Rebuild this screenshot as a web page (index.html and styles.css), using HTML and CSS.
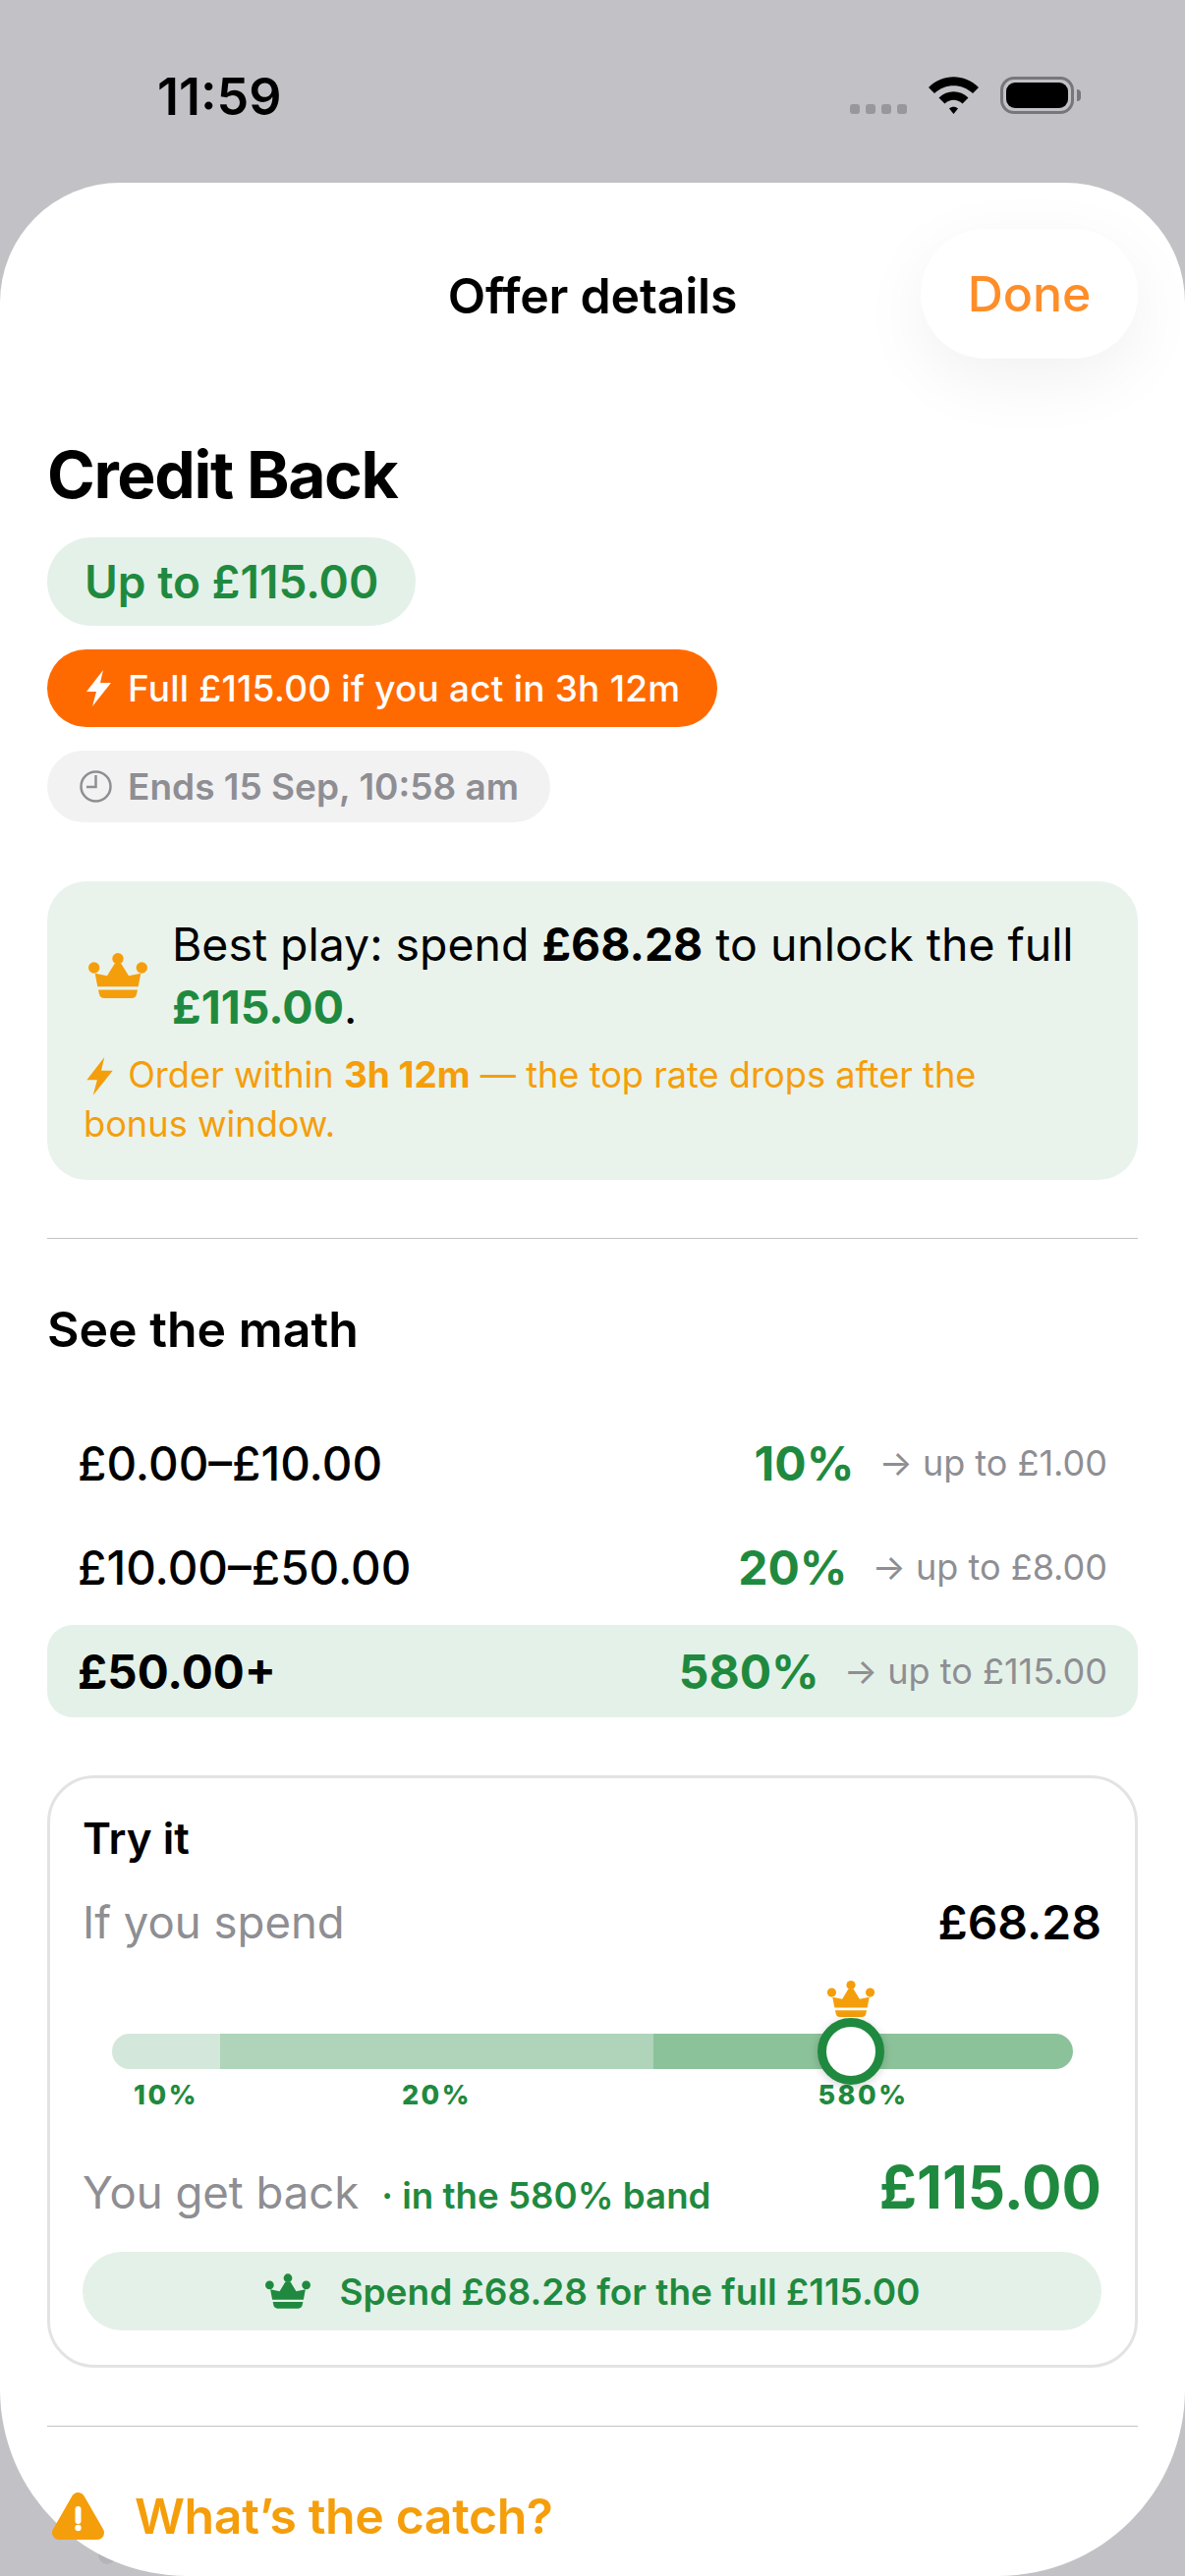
FILE: index.html
```html
<!DOCTYPE html>
<html lang="en">
<head>
    <meta charset="UTF-8">
    <meta name="viewport" content="width=device-width, initial-scale=1.0">
    <title>Offer details</title>
    <link rel="stylesheet" href="styles.css">
</head>
<body>
    <svg class="defs" width="0" height="0">
        <symbol id="crown" viewBox="0 0 60 46">
            <circle cx="5.7" cy="15" r="5.7"/>
            <circle cx="30" cy="5.7" r="5.7"/>
            <circle cx="54.3" cy="15" r="5.7"/>
            <path d="M6.7 20.7 19 23.3 26.7 10.7H33.3L41 23.3 53.3 20.7 50.7 34.3H9.3Z"/>
            <path d="M10 37.5H50L49 42Q48 46 44 46H16Q12 46 11 42Z"/>
        </symbol>
        <symbol id="bolt" viewBox="0 0 25 37">
            <path d="M17 0 0 22H10L6 37 25 13H14Z"/>
        </symbol>
    </svg>

    <div class="status-bar">
        <span class="time">11:59</span>
        <div class="status-icons">
            <div class="signal"><i></i><i></i><i></i><i></i></div>
            <svg class="wifi" viewBox="0 0 51 38">
                <path d="M0 11C14-3.5 37-3.5 51 11L45 17C34 6.5 17 6.5 6 17Z"/>
                <path d="M10.5 21.5C19 13 32 13 40.5 21.5L34.5 27.5C29 22.5 22 22.5 16.5 27.5Z"/>
                <path d="M21 32.5C23.5 30 27.5 30 30 32.5L25.5 38Z"/>
            </svg>
            <div class="battery"><div class="battery-fill"></div></div>
            <div class="battery-nub"></div>
        </div>
    </div>

    <div class="edge-mark"></div>

    <main class="sheet">
        <header class="nav">
            <span></span>
            <span class="nav-title">Offer details</span>
            <button class="done">Done</button>
        </header>

        <h1 class="offer-title">Credit Back</h1>

        <div class="pills">
            <div class="pill pill-amount">Up to £115.00</div>
            <div class="pill pill-urgent">
                <svg class="pill-bolt"><use href="#bolt"/></svg>
                Full £115.00 if you act in 3h 12m
            </div>
            <div class="pill pill-ends">
                <svg class="clock" viewBox="0 0 33 33">
                    <circle cx="16.5" cy="16.5" r="15"/>
                    <path d="M16.5 5V17H7"/>
                </svg>
                Ends 15 Sep, 10:58 am
            </div>
        </div>

        <section class="best">
            <div class="best-main">
                <svg class="best-crown"><use href="#crown"/></svg>
                <p>Best play: spend <b>£68.28</b> to unlock the full <b class="green">£115.00</b>.</p>
            </div>
            <p class="best-note">
                <svg class="note-bolt"><use href="#bolt"/></svg>
                Order within <b>3h 12m</b> — the top rate drops after the<br>bonus window.
            </p>
        </section>

        <hr class="divider">

        <h2 class="math-title">See the math</h2>

        <div class="bands">
            <div class="band">
                <span class="band-range">£0.00–£10.00</span>
                <span class="band-rate">10%</span>
                <span class="band-cap">→ up to £1.00</span>
            </div>
            <div class="band">
                <span class="band-range">£10.00–£50.00</span>
                <span class="band-rate">20%</span>
                <span class="band-cap">→ up to £8.00</span>
            </div>
            <div class="band band-top">
                <span class="band-range">£50.00+</span>
                <span class="band-rate">580%</span>
                <span class="band-cap">→ up to £115.00</span>
            </div>
        </div>

        <section class="try">
            <h3 class="try-title">Try it</h3>
            <div class="spend-row">
                <span class="muted">If you spend</span>
                <span class="spend-value">£68.28</span>
            </div>

            <div class="slider">
                <div class="track">
                    <div class="seg seg-1" style="width: 11.25%"></div>
                    <div class="seg seg-2" style="width: 45.09%"></div>
                    <div class="seg seg-3" style="width: 43.66%"></div>
                </div>
                <div class="thumb" style="left: 76.9%">
                    <svg class="thumb-crown"><use href="#crown"/></svg>
                    <div class="knob"></div>
                </div>
                <div class="ticks">
                    <span style="width: 11.25%">10%</span>
                    <span style="width: 45.09%">20%</span>
                    <span style="width: 43.66%">580%</span>
                </div>
            </div>

            <div class="back-row">
                <span class="muted">You get back</span>
                <span class="back-band">· in the 580% band</span>
                <span class="back-value">£115.00</span>
            </div>

            <div class="try-note">
                <svg class="try-crown"><use href="#crown"/></svg>
                Spend £68.28 for the full £115.00
            </div>
        </section>

        <hr class="divider">

        <div class="catch">
            <svg class="warn" viewBox="0 0 53 48">
                <path class="warn-bg" d="M26.5 7 7 41H46Z"/>
                <path class="warn-mark" d="M26.5 17V29"/>
                <circle cx="26.5" cy="36" r="3.2" fill="#fff"/>
            </svg>
            <span>What’s the catch?</span>
        </div>
    </main>
</body>
</html>
```

FILE: styles.css
```css
* {
    box-sizing: border-box;
}

html,
body {
    margin: 0;
    padding: 0;
}

body {
    position: relative;
    width: 1206px;
    height: 2622px;
    overflow: hidden;
    background-color: #c2c1c6;
    font-family: Inter, "Liberation Sans", sans-serif;
    color: #000;
}

.defs {
    position: absolute;
}

/* status bar */
.status-bar {
    height: 186px;
    padding: 69px 106px 0 160px;
    display: flex;
    justify-content: space-between;
}

.time {
    font-size: 52px;
    line-height: 60px;
    font-weight: 600;
}

.status-icons {
    height: 38px;
    margin-top: 9px;
    display: flex;
    align-items: flex-end;
}

.signal {
    display: flex;
    gap: 6px;
    margin-right: 22px;
}

.signal i {
    width: 10px;
    height: 10px;
    border-radius: 3px;
    background-color: #98989c;
}

.wifi {
    width: 51px;
    height: 38px;
    margin-right: 22px;
}

.battery {
    width: 75px;
    height: 38px;
    padding: 3px;
    border: 3px solid #77777b;
    border-radius: 14px;
}

.battery-fill {
    height: 100%;
    border-radius: 9px;
    background-color: #000;
}

.battery-nub {
    width: 4px;
    height: 12px;
    margin: 0 0 13px 3px;
    border-radius: 0 4px 4px 0;
    background-color: #77777b;
}

/* small shape peeking out under the sheet's bottom edge */
.edge-mark {
    position: absolute;
    left: 100px;
    top: 2590px;
    width: 18px;
    height: 20px;
    border-radius: 50%;
    background-color: #b4b4b9;
}

/* sheet */
.sheet {
    position: relative;
    height: 2436px;
    padding: 47px 48px 0;
    background-color: #fff;
    border-radius: 122px 122px 190px 190px;
}

.nav {
    display: grid;
    grid-template-columns: 1fr auto 1fr;
    align-items: center;
}

.nav-title {
    font-size: 50px;
    line-height: 60px;
    font-weight: 600;
    letter-spacing: -0.2px;
    margin-top: 3px;
}

.done {
    justify-self: end;
    width: 221px;
    height: 132px;
    padding: 0;
    border: none;
    border-radius: 66px;
    background-color: #fff;
    box-shadow: 0 20px 70px rgba(0, 0, 0, 0.06);
    color: #ff8d28;
    font-family: inherit;
    font-size: 50px;
    font-weight: 500;
}

.offer-title {
    margin: 78px 0 24px;
    font-size: 66px;
    line-height: 80px;
    font-weight: 700;
    letter-spacing: -1.4px;
}

.pills {
    display: flex;
    flex-direction: column;
    align-items: flex-start;
    gap: 24px;
}

.pill {
    display: flex;
    align-items: center;
    border-radius: 50px;
    font-weight: 600;
}

.pill-amount {
    height: 90px;
    padding: 0 38px;
    background-color: #e4f1e8;
    color: #1f8a3f;
    font-size: 46px;
}

.pill-urgent {
    height: 79px;
    padding: 0 38px 0 40px;
    gap: 17px;
    background-color: #ff6a00;
    color: #fff;
    font-size: 37px;
    font-weight: 500;
    letter-spacing: 0.2px;
}

.pill-bolt {
    width: 25px;
    height: 37px;
    fill: #fff;
}

.pill-ends {
    height: 73px;
    padding: 0 32px 0 33px;
    gap: 16px;
    background-color: #f2f2f3;
    color: #8e8e93;
    font-size: 37px;
}

.clock {
    width: 33px;
    height: 33px;
    fill: none;
    stroke: #8e8e93;
    stroke-width: 2.5;
}

.best {
    margin-top: 60px;
    padding: 32px 48px 32px 37px;
    background-color: #e9f3ec;
    border-radius: 40px;
}

.best-main {
    display: flex;
    align-items: center;
    padding-left: 5px;
    gap: 25px;
}

.best-main p {
    margin: 0;
    font-size: 46.4px;
    line-height: 64px;
}

.best-crown {
    flex: none;
    width: 60px;
    height: 46px;
    fill: #f59e0b;
}

.green {
    color: #1f8a3f;
}

.best-note {
    margin: 12px 0 0;
    font-size: 36.2px;
    line-height: 50px;
    color: #f59e0b;
}

.best-note b {
    font-size: 37px;
}

.note-bolt {
    width: 27px;
    height: 39px;
    margin: 0 5px -8px 3px;
    fill: #f59e0b;
}

.divider {
    height: 1px;
    margin: 59px 0 0;
    border: none;
    background-color: #c4c4c7;
}

.math-title {
    margin: 62px 0 59px;
    font-size: 50px;
    line-height: 60px;
    font-weight: 600;
}

.bands {
    display: flex;
    flex-direction: column;
    gap: 12px;
}

.band {
    height: 94px;
    padding: 0 31px;
    display: flex;
    align-items: center;
    gap: 25px;
    border-radius: 26px;
}

.band-range {
    flex: 1;
    font-size: 47.5px;
    font-weight: 500;
}

.band-rate {
    font-size: 48px;
    font-weight: 700;
    color: #1f8a3f;
}

.band-cap {
    font-size: 36px;
    color: #8e8e93;
}

.band-top {
    background-color: #e4f1e8;
}

.band-top .band-range {
    font-weight: 700;
}

/* try it card */
.try {
    margin-top: 59px;
    padding: 34px 34px 35px 33px;
    border: 3px solid #e3e3e5;
    border-radius: 48px;
}

.try-title {
    margin: 0;
    font-size: 44px;
    line-height: 54px;
    font-weight: 600;
}

.spend-row {
    margin-top: 31px;
    display: flex;
    justify-content: space-between;
    font-size: 45.5px;
    line-height: 56px;
}

.muted {
    color: #8e8e93;
}

.spend-value {
    font-size: 48px;
    font-weight: 600;
}

.slider {
    position: relative;
    margin: 85px 29px 0 30px;
}

.track {
    height: 36px;
    display: flex;
    border-radius: 18px;
    overflow: hidden;
}

.seg-1 {
    background-color: #d3e8da;
}

.seg-2 {
    background-color: #afd4ba;
}

.seg-3 {
    background-color: #8cc29a;
}

.thumb {
    position: absolute;
    top: -54px;
    width: 68px;
    margin-left: -34px;
    display: flex;
    flex-direction: column;
    align-items: center;
}

.thumb-crown {
    width: 50px;
    height: 37px;
    margin-bottom: 1px;
    fill: #f59e0b;
}

.knob {
    width: 68px;
    height: 68px;
    border: 9px solid #1f8a3f;
    border-radius: 50%;
    background-color: #fff;
    box-shadow: 0 2px 10px rgba(0, 0, 0, 0.18);
}

.ticks {
    margin-top: 11px;
    display: flex;
    text-align: center;
    font-size: 27px;
    line-height: 32px;
    font-weight: 800;
    letter-spacing: 2.5px;
    color: #1f8a3f;
}

.back-row {
    margin-top: 47px;
    display: flex;
    align-items: baseline;
    font-size: 45.5px;
    line-height: 1;
}

.back-band {
    flex: 1;
    margin-left: 23px;
    font-size: 36.7px;
    font-weight: 600;
    color: #1f8a3f;
}

.back-value {
    font-size: 60px;
    font-weight: 700;
    color: #1f8a3f;
}

.try-note {
    height: 80px;
    margin-top: 36px;
    padding-left: 2px;
    display: flex;
    align-items: center;
    justify-content: center;
    gap: 29px;
    border-radius: 40px;
    background-color: #e4f1e8;
    color: #1f8a3f;
    font-size: 37px;
    font-weight: 600;
}

.try-crown {
    width: 46px;
    height: 36px;
    fill: #1f8a3f;
}

.catch {
    margin-top: 61px;
    display: flex;
    align-items: center;
    gap: 31px;
    padding-left: 5px;
    font-size: 50px;
    line-height: 60px;
    font-weight: 600;
    letter-spacing: -0.4px;
    color: #f59e0b;
}

.warn {
    width: 53px;
    height: 48px;
}

.warn-bg {
    fill: #f59e0b;
    stroke: #f59e0b;
    stroke-width: 14;
    stroke-linejoin: round;
}

.warn-mark {
    fill: none;
    stroke: #fff;
    stroke-width: 6;
    stroke-linecap: round;
}
```
